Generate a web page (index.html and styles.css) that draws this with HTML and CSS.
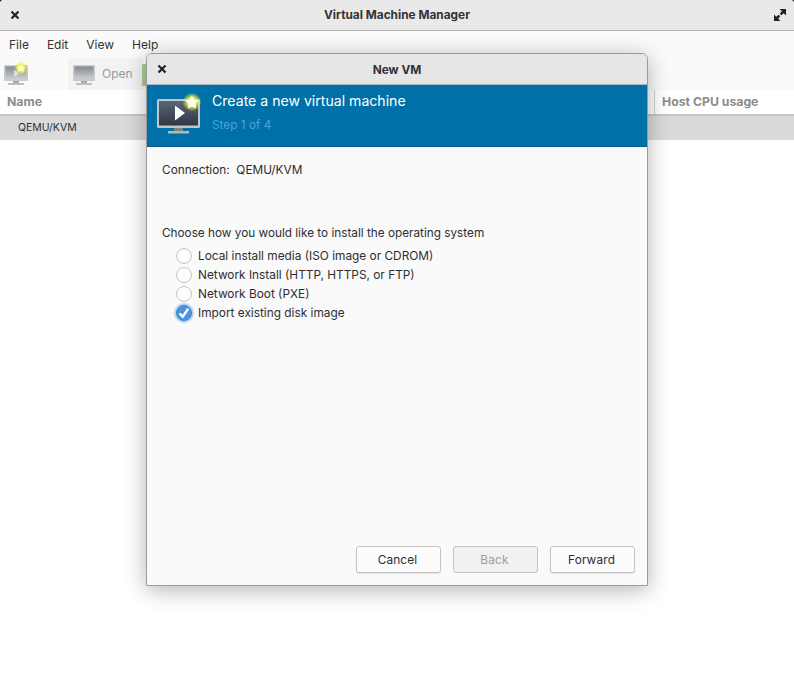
FILE: index.html
```html
<!DOCTYPE html>
<html lang="en">
<head>
    <meta charset="UTF-8">
    <title>Virtual Machine Manager</title>
    <link rel="stylesheet" href="styles.css">
</head>
<body>
    <svg class="defs" width="0" height="0">
        <defs>
            <linearGradient id="screen" x1="0" y1="0" x2="0" y2="1">
                <stop offset="0" stop-color="#5a6676"/>
                <stop offset="1" stop-color="#2f3744"/>
            </linearGradient>
            <linearGradient id="screenOff" x1="0" y1="0" x2="0" y2="1">
                <stop offset="0" stop-color="#838a93"/>
                <stop offset="1" stop-color="#c9ccd0"/>
            </linearGradient>
            <radialGradient id="glow">
                <stop offset="0.45" stop-color="#eef04a"/>
                <stop offset="1" stop-color="#eef04a" stop-opacity="0"/>
            </radialGradient>
        </defs>
    </svg>

    <div class="app">
        <div class="titlebar">
            <svg class="close" width="10" height="10" viewBox="0 0 10 10"><path d="M1.5 1.5l7 7M8.5 1.5l-7 7"/></svg>
            <span class="title">Virtual Machine Manager</span>
            <svg class="maximize" width="14" height="14" viewBox="0 0 14 14">
                <path d="M6.5 1H13V7.500L10.800 5.300L8.300 7.300L6.800 5.800L8.800 3.300Z"/>
                <path d="M7.500 13H1V6.500L3.200 8.700L5.700 6.700L7.200 8.200L5.200 10.700Z"/>
            </svg>
        </div>
        <div class="menubar">
            <span>File</span>
            <span>Edit</span>
            <span>View</span>
            <span>Help</span>
        </div>
        <div class="toolbar">
            <div class="tool new-tool">
                <svg width="26" height="26" viewBox="0 0 26 26">
                    <rect x="1" y="4" width="24" height="16" rx="1" fill="#c9cccd"/>
                    <rect x="2.500" y="5.500" width="21" height="12" fill="url(#screenOff)"/>
                    <path d="M11 9v7l5-3.500z" fill="#dfe1e3"/>
                    <rect x="10" y="20" width="6" height="2" fill="#a6a9ab"/>
                    <rect x="5" y="22" width="16" height="2" fill="#bcbfc1"/>
                    <circle cx="18" cy="7" r="7" fill="url(#glow)"/>
                    <path d="M18 3l1.300 2.700 3 .4-2.200 2 .6 3-2.700-1.500-2.700 1.500.6-3-2.200-2 3-.4z" fill="#fbfbe8"/>
                </svg>
            </div>
            <div class="tool open-tool">
                <svg width="24" height="24" viewBox="0 0 24 24">
                    <rect x="1" y="3" width="22" height="16" rx="1" fill="#c6c9ca"/>
                    <rect x="2.500" y="4.500" width="19" height="12" fill="url(#screenOff)"/>
                    <rect x="9" y="19" width="6" height="2" fill="#a6a9ab"/>
                    <rect x="4" y="21" width="16" height="2" fill="#bcbfc1"/>
                </svg>
                <span class="open-label">Open</span>
            </div>
            <div class="run-tool"></div>
        </div>
        <div class="columns">
            <span class="col-name">Name</span>
            <span class="col-cpu">Host CPU usage</span>
        </div>
        <div class="row-selected">QEMU/KVM</div>
    </div>

    <div class="dialog">
        <div class="dialog-title">
            <svg class="close" width="10" height="10" viewBox="0 0 10 10"><path d="M1.5 1.5l7 7M8.5 1.5l-7 7"/></svg>
            <span class="title">New VM</span>
        </div>
        <div class="banner">
            <svg class="banner-icon" width="48" height="48" viewBox="0 0 48 48">
                <rect x="1" y="7" width="43" height="29" rx="1.500" fill="#c3c5c6"/>
                <rect x="3" y="9" width="39" height="24.500" fill="url(#screen)"/>
                <path d="M19 13.500v15l10-7.500z" fill="#fff"/>
                <rect x="18" y="36" width="9" height="3" fill="#7d8184"/>
                <rect x="12" y="39" width="21" height="2.500" fill="#b4b7b8"/>
                <circle cx="36" cy="10" r="9.500" fill="url(#glow)"/>
                <path d="M36 3.500l2.100 4.300 4.700.7-3.400 3.300.8 4.700-4.200-2.200-4.200 2.200.8-4.700-3.400-3.300 4.700-.7z" fill="#fdfdf0"/>
            </svg>
            <div class="banner-text">
                <div class="banner-head">Create a new virtual machine</div>
                <div class="banner-step">Step 1 of 4</div>
            </div>
        </div>
        <div class="dialog-body">
            <div class="connection">Connection:&nbsp; QEMU/KVM</div>
            <div class="choose">Choose how you would like to install the operating system</div>
            <div class="choices">
                <div class="choice"><span class="radio"></span>Local install media (ISO image or CDROM)</div>
                <div class="choice"><span class="radio"></span>Network Install (HTTP, HTTPS, or FTP)</div>
                <div class="choice"><span class="radio"></span>Network Boot (PXE)</div>
                <div class="choice">
                    <span class="radio checked">
                        <svg width="14" height="14" viewBox="0 0 14 14"><path d="M2.500 7.500l3.200 3.200 5.500-8"/></svg>
                    </span>Import existing disk image
                </div>
            </div>
        </div>
        <div class="dialog-actions">
            <button>Cancel</button>
            <button class="disabled">Back</button>
            <button>Forward</button>
        </div>
    </div>
</body>
</html>
```

FILE: styles.css
```css
* {
    box-sizing: border-box;
}
html, body {
    margin: 0;
    height: 100%;
}
body {
    position: relative;
    width: 794px;
    height: 694px;
    overflow: hidden;
    background: #2a2a2a;
    font-family: Inter, "Liberation Sans", sans-serif;
    font-size: 11.85px;
    color: #2e2e2e;
}
.defs {
    position: absolute;
}
.app {
    height: 694px;
    background: #fff;
    border-radius: 4px 4px 0 0;
    overflow: hidden;
}
.titlebar {
    position: relative;
    height: 31px;
    background: #e9e9e9;
    border-bottom: 1px solid #b4b4b4;
    display: flex;
    align-items: center;
    justify-content: center;
}
.title {
    font-weight: 700;
    font-size: 11.85px;
    color: #333;
}
.close {
    position: absolute;
    left: 10px;
    top: 10px;
}
.close path {
    stroke: #222;
    stroke-width: 2.2;
    fill: none;
}
.maximize {
    position: absolute;
    left: 773px;
    top: 8px;
}
.maximize path {
    fill: #222;
}
.menubar {
    height: 27px;
    background: #fafafa;
    display: flex;
    align-items: center;
    gap: 18px;
    padding-left: 9px;
    font-size: 12px;
    color: #333;
}
.toolbar {
    height: 32px;
    background: #fafafa;
    display: flex;
}
.tool {
    display: flex;
    align-items: center;
}
.new-tool {
    width: 68px;
    padding-left: 3px;
}
.open-tool {
    width: 74px;
    background: #f3f3f3;
    padding-left: 4px;
    gap: 6px;
    color: #9a9a9a;
    font-size: 12px;
}
.open-label {
    margin-top: -2px;
}
.run-tool {
    width: 6px;
    margin: 6px 0 4px;
    background: #a9cf92;
}
.columns {
    height: 24px;
    background: #fff;
    display: flex;
    font-weight: 700;
    font-size: 12.250px;
    line-height: 24px;
    color: #8c8c8c;
}
.col-name {
    width: 654px;
    padding-left: 7px;
}
.col-cpu {
    height: 24px;
    border-left: 1px solid #d0d0d0;
    padding-left: 7px;
}
.row-selected {
    height: 26px;
    background: #dadada;
    border-top: 2px solid #c6c6c6;
    padding-left: 18px;
    line-height: 23px;
    font-size: 10.500px;
    color: #333;
}
.dialog {
    position: absolute;
    left: 146px;
    top: 53px;
    width: 502px;
    height: 533px;
    background: #fafafa;
    border: 1px solid #9c9c9c;
    border-radius: 6px 6px 0 0;
    box-shadow: 0 4px 22px rgba(0, 0, 0, 0.3);
    display: flex;
    flex-direction: column;
}
.dialog-title {
    position: relative;
    height: 30px;
    flex: none;
    padding-top: 2px;
    background: #e6e6e6;
    border-radius: 5px 5px 0 0;
    display: flex;
    align-items: center;
    justify-content: center;
}
.banner {
    height: 63px;
    flex: none;
    background: #0070a8;
    border-top: 1px solid #a8b8c0;
    border-bottom: 1px solid #075a84;
    display: flex;
    padding: 0 0 0 9px;
}
.banner-icon {
    margin-top: 7px;
}
.banner-text {
    padding: 7px 0 0 8px;
}
.banner-head {
    font-size: 14.100px;
    color: #fff;
}
.banner-step {
    margin-top: 9px;
    font-size: 11.850px;
    color: #4ba3d8;
}
.dialog-body {
    flex: 1;
    padding: 16px 15px 0;
}
.connection {
    line-height: 15px;
}
.choose {
    margin-top: 48px;
    line-height: 15px;
    font-size: 11.780px;
}
.choices {
    margin-top: 5px;
    padding-left: 14px;
}
.choice {
    height: 19px;
    display: flex;
    align-items: center;
    gap: 6px;
}
.radio {
    width: 16px;
    height: 16px;
    border-radius: 50%;
    background: #fcfcfc;
    border: 1px solid #c4c4c4;
    display: flex;
    align-items: center;
    justify-content: center;
}
.radio.checked {
    background: #4a96de;
    border-color: #3a86cc;
    box-shadow: 0 0 1px 2px #b9d5f0;
}
.radio svg path {
    stroke: #fff;
    stroke-width: 2.4;
    fill: none;
}
.dialog-actions {
    flex: none;
    display: flex;
    justify-content: flex-end;
    gap: 12px;
    padding: 0 12px 12px;
}
button {
    width: 85px;
    height: 27px;
    font: inherit;
    font-size: 11.85px;
    letter-spacing: 0.15px;
    color: #2e2e2e;
    background: #fcfcfc;
    border: 1px solid #c4c4c4;
    border-radius: 3px;
    box-shadow: 0 1px 1px rgba(0, 0, 0, 0.1);
    padding: 1px 2px 0 0;
}
button.disabled {
    background: #f1f1f1;
    color: #9c9c9c;
    box-shadow: none;
}
```
